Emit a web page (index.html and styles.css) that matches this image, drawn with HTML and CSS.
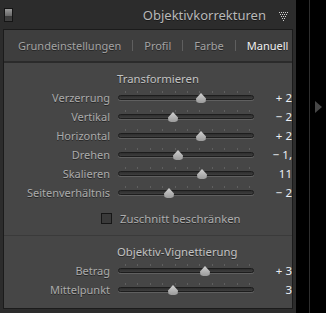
FILE: index.html
```html
<!DOCTYPE html>
<html lang="de">
<head>
  <meta charset="UTF-8">
  <title>Objektivkorrekturen</title>
  <link rel="stylesheet" href="styles.css">
</head>
<body>
  <div id="app">
    <div id="side">
      <div id="header">
        <span class="solo-switch"></span>
        <span class="header-title">Objektivkorrekturen</span>
        <svg class="header-menu" viewBox="0 0 10 10" width="10" height="10">
          <g fill="#cfcfcf">
            <rect x="0" y="1" width="1" height="1"></rect><rect x="2" y="1" width="1" height="1"></rect>
            <rect x="4" y="1" width="1" height="1"></rect><rect x="6" y="1" width="1" height="1"></rect>
            <rect x="8" y="1" width="1" height="1"></rect>
            <rect x="1" y="3" width="1" height="1"></rect><rect x="3" y="3" width="1" height="1"></rect>
            <rect x="5" y="3" width="1" height="1"></rect><rect x="7" y="3" width="1" height="1"></rect>
            <rect x="2" y="5" width="1" height="1"></rect><rect x="4" y="5" width="1" height="1"></rect>
            <rect x="6" y="5" width="1" height="1"></rect>
            <rect x="3" y="7" width="1" height="1"></rect><rect x="5" y="7" width="1" height="1"></rect>
            <rect x="4" y="9" width="1" height="1"></rect>
          </g>
        </svg>
      </div>

      <div id="panel">
        <div class="tabs">
          <span class="tab">Grundeinstellungen</span>
          <span class="tab-sep"></span>
          <span class="tab">Profil</span>
          <span class="tab-sep"></span>
          <span class="tab">Farbe</span>
          <span class="tab-sep"></span>
          <span class="tab active">Manuell</span>
        </div>

        <div class="panel-body">
          <div class="section">
            <div class="section-title">Transformieren</div>
            <div class="row">
              <span class="label">Verzerrung</span>
              <div class="slider"><span class="ticks"></span><span class="track"></span><span class="thumb" style="left: 83px"></span></div>
              <span class="value">+ 2</span>
            </div>
            <div class="row">
              <span class="label">Vertikal</span>
              <div class="slider"><span class="ticks"></span><span class="track"></span><span class="thumb" style="left: 55px"></span></div>
              <span class="value">− 2</span>
            </div>
            <div class="row">
              <span class="label">Horizontal</span>
              <div class="slider"><span class="ticks"></span><span class="track"></span><span class="thumb" style="left: 83px"></span></div>
              <span class="value">+ 2</span>
            </div>
            <div class="row">
              <span class="label">Drehen</span>
              <div class="slider"><span class="ticks"></span><span class="track"></span><span class="thumb" style="left: 60px"></span></div>
              <span class="value">− 1,</span>
            </div>
            <div class="row">
              <span class="label">Skalieren</span>
              <div class="slider"><span class="ticks"></span><span class="track"></span><span class="thumb" style="left: 84px"></span></div>
              <span class="value">11</span>
            </div>
            <div class="row">
              <span class="label">Seitenverhältnis</span>
              <div class="slider"><span class="ticks"></span><span class="track"></span><span class="thumb" style="left: 51px"></span></div>
              <span class="value">− 2</span>
            </div>
            <label class="check-row">
              <span class="check-box"></span>
              <span class="check-text">Zuschnitt beschränken</span>
            </label>
          </div>

          <div class="section">
            <div class="section-title">Objektiv-Vignettierung</div>
            <div class="row">
              <span class="label">Betrag</span>
              <div class="slider"><span class="ticks"></span><span class="track"></span><span class="thumb" style="left: 87px"></span></div>
              <span class="value">+ 3</span>
            </div>
            <div class="row">
              <span class="label">Mittelpunkt</span>
              <div class="slider"><span class="ticks"></span><span class="track"></span><span class="thumb" style="left: 55px"></span></div>
              <span class="value">3</span>
            </div>
          </div>
        </div>
      </div>
    </div>

    <div id="gutter">
      <span class="gutter-arrow"></span>
    </div>
  </div>
</body>
</html>
```

FILE: styles.css
```css
html, body {
  margin: 0;
  padding: 0;
  width: 326px;
  height: 313px;
  overflow: hidden;
  background: #000;
  font-family: "Noto Sans", "Open Sans", sans-serif;
}
#app {
  display: flex;
  width: 326px;
  height: 313px;
}
#side {
  width: 296px;
  height: 313px;
  background: #2c2c2c;
  display: flex;
  flex-direction: column;
}
#header {
  height: 29px;
  display: flex;
  align-items: center;
  padding: 0 7px 0 4px;
  box-sizing: border-box;
}
.solo-switch {
  width: 7px;
  height: 12px;
  border: 1px solid #151515;
  background: linear-gradient(#9a9a9a, #6a6a6a 55%, #3a3a3a 56%, #404040);
  margin-right: auto;
  margin-top: 1px;
}
.header-title {
  font-size: 13px;
  color: #b9b9b9;
  margin-right: 13px;
  text-shadow: 0 1px 0 #1a1a1a;
}
.header-menu {
  margin-top: 2px;
}
#panel {
  margin-left: 3px;
  width: 290px;
  height: 280px;
  border: 1px solid #1b1b1b;
  box-sizing: border-box;
  overflow: hidden;
  background: #464646;
}
.tabs {
  height: 31px;
  display: flex;
  align-items: center;
  gap: 11px;
  padding-left: 14px;
  background: #3e3e3e;
  border-bottom: 2px solid #2b2b2b;
  white-space: nowrap;
}
.tab {
  font-size: 11px;
  color: #a3a3a3;
  text-shadow: 0 1px 0 #262626;
}
.tab.active {
  color: #f2f2f2;
}
.tab-sep {
  width: 1px;
  height: 11px;
  background: #5f5f5f;
  flex: 0 0 1px;
}
.panel-body {
  width: 288px;
}
.section {
  padding-top: 6px;
}
.section + .section {
  border-top: 1px solid #3a3a3a;
}
.section-title {
  height: 19px;
  line-height: 19px;
  padding-left: 113px;
  font-size: 11.3px;
  color: #c2c2c2;
  text-shadow: 0 1px 0 #2a2a2a;
}
.row {
  display: grid;
  grid-template-columns: 106px 136px 30px;
  column-gap: 8px;
  height: 19px;
  align-items: center;
}
.label {
  text-align: right;
  font-size: 11px;
  color: #ababab;
  text-shadow: 0 1px 0 #262626;
  white-space: nowrap;
}
.value {
  text-align: right;
  font-size: 11.5px;
  color: #eaeef4;
  white-space: nowrap;
}
.slider {
  position: relative;
  height: 19px;
}
.track {
  position: absolute;
  left: 0;
  right: 0;
  top: 7px;
  height: 5px;
  box-sizing: border-box;
  border: 1px solid #1d1d1d;
  border-radius: 3px;
  background: linear-gradient(#2e2e2e, #3e3e3e);
  box-shadow: 0 1px 0 #606060;
}
.ticks {
  position: absolute;
  left: 7px;
  width: 125px;
  top: 3px;
  height: 2px;
  background: repeating-linear-gradient(to right, #5f5f5f 0 1px, transparent 1px 12.4px);
}
.thumb {
  position: absolute;
  top: 5px;
  width: 10px;
  height: 10px;
  margin-left: -5px;
  background: linear-gradient(#d0d0d0, #9a9a9a);
  clip-path: polygon(50% 0, 100% 55%, 95% 90%, 70% 100%, 30% 100%, 5% 90%, 0 55%);
}
.check-row {
  display: flex;
  align-items: center;
  gap: 8px;
  height: 19px;
  margin-top: 7px;
  margin-bottom: 7px;
  padding-left: 97px;
}
.check-box {
  width: 11px;
  height: 11px;
  box-sizing: border-box;
  border: 1px solid #161616;
  background: #3a3a3a;
}
.check-text {
  font-size: 11.3px;
  color: #adadad;
  text-shadow: 0 1px 0 #262626;
}
#gutter {
  flex: 1;
  position: relative;
  background: #000;
}
#gutter::before {
  content: "";
  position: absolute;
  left: 13px;
  top: 0;
  bottom: 0;
  width: 1px;
  background: #2e2e2e;
}
.gutter-arrow {
  position: absolute;
  left: 19px;
  top: 101px;
  width: 0;
  height: 0;
  border-top: 6px solid transparent;
  border-bottom: 6px solid transparent;
  border-left: 7px solid #474747;
}
```
